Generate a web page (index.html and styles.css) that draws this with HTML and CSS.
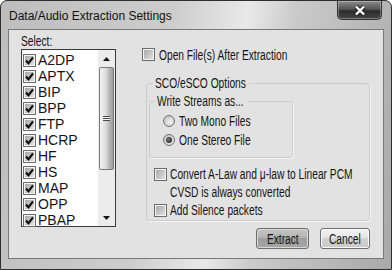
FILE: index.html
```html
<!DOCTYPE html>
<html lang="en">
<head>
  <meta charset="UTF-8">
  <title>Data/Audio Extraction Settings</title>
  <link rel="stylesheet" href="styles.css">
</head>
<body>
  <div class="window">
    <div class="titlebar">
      <span class="title">Data/Audio Extraction Settings</span>
      <span class="close">
        <svg width="16" height="11" viewBox="0 0 16 11">
          <path d="M4 1.5 L12 9.5 M12 1.5 L4 9.5" stroke="#1c1c1c" stroke-width="4.2" fill="none"/>
          <path d="M4 1.5 L12 9.5 M12 1.5 L4 9.5" stroke="#fff" stroke-width="2.4" fill="none"/>
        </svg>
      </span>
    </div>

    <div class="client">
      <div class="left">
        <div class="lbl"><span class="nar">Select:</span></div>
        <div class="listbox">
          <ul class="items">
            <li><span class="cb on"></span>A2DP</li>
            <li><span class="cb on"></span>APTX</li>
            <li><span class="cb on"></span>BIP</li>
            <li><span class="cb on"></span>BPP</li>
            <li><span class="cb on"></span>FTP</li>
            <li><span class="cb on"></span>HCRP</li>
            <li><span class="cb on"></span>HF</li>
            <li><span class="cb on"></span>HS</li>
            <li><span class="cb on"></span>MAP</li>
            <li><span class="cb on"></span>OPP</li>
            <li><span class="cb on"></span>PBAP</li>
          </ul>
          <div class="scrollbar">
            <div class="sb-btn">
              <svg width="7" height="4" viewBox="0 0 7 4"><polygon points="0,4 3.5,0 7,4" fill="#111"/></svg>
            </div>
            <div class="thumb"><span class="grip"></span></div>
            <div class="track"></div>
            <div class="sb-btn">
              <svg width="7" height="4" viewBox="0 0 7 4"><polygon points="0,0 7,0 3.5,4" fill="#111"/></svg>
            </div>
          </div>
        </div>
      </div>

      <div class="right">
        <div class="row"><span class="cb"></span><span class="nar">Open File(s) After Extraction</span></div>

        <fieldset class="grp">
          <legend class="lg-sco"><span class="nar">SCO/eSCO Options</span></legend>
          <fieldset class="grp inner">
            <legend class="lg-write"><span class="nar">Write Streams as...</span></legend>
            <div class="rrow first"><span class="radio"></span><span class="nar">Two Mono Files</span></div>
            <div class="rrow"><span class="radio sel"></span><span class="nar">One Stereo File</span></div>
          </fieldset>
          <div class="crow first"><span class="cb"></span><span class="nar">Convert A-Law and μ-law to Linear PCM</span></div>
          <div class="crow note"><span class="nar">CVSD is always converted</span></div>
          <div class="crow"><span class="cb"></span><span class="nar">Add Silence packets</span></div>
        </fieldset>

        <div class="buttons">
          <button class="btn default"><span class="nar">Extract</span></button>
          <button class="btn"><span class="nar">Cancel</span></button>
        </div>
      </div>
    </div>
  </div>
</body>
</html>
```

FILE: styles.css
```css
body {
  margin: 0;
  background: #fff;
}
.window {
  width: 392px;
  height: 270px;
  box-sizing: border-box;
  border: 1px solid #2e2e2e;
  border-radius: 7px 7px 0 0;
  background: linear-gradient(100deg, #bdbdbd 0%, #cdcdcd 40%, #e9e9e9 57%, #cacaca 68%, #a9a9a9 100%);
  display: flex;
  flex-direction: column;
  font-family: "Liberation Sans", sans-serif;
  font-size: 14px;
  color: #151515;
  overflow: hidden;
}
/* the dialog font is a tall condensed face */
.nar {
  display: inline-block;
  white-space: nowrap;
  transform: scaleX(0.73);
  transform-origin: 0 50%;
}
.titlebar {
  height: 28px;
  display: flex;
  justify-content: space-between;
  align-items: flex-start;
}
.title {
  font-size: 12px;
  line-height: 15px;
  margin: 8px 0 0 8px;
  color: #111;
}
.close {
  width: 45px;
  height: 19px;
  margin-right: 9px;
  box-sizing: border-box;
  border: 1px solid #333;
  border-top: none;
  border-radius: 0 0 5px 5px;
  background: linear-gradient(#8c8c8c, #555 45%, #2c2c2c 55%, #444);
  box-shadow: inset 0 0 0 1px rgba(255,255,255,.3);
  display: flex;
  align-items: center;
  justify-content: center;
}
.client {
  height: 230px;
  box-sizing: border-box;
  margin: 0 7px 10px;
  border: 1px solid #787878;
  background: #e2e2e2;
  display: flex;
}

/* left list */
.left {
  width: 95px;
  padding: 3px 0 0 12px;
}
.lbl {
  line-height: 16px;
}
.listbox {
  width: 95px;
  height: 178px;
  box-sizing: border-box;
  border: 1px solid #3a3a3a;
  background: #fff;
  display: flex;
}
.items {
  flex: 1;
  list-style: none;
  margin: 0;
  padding: 2px 0 0 1px;
}
.items li {
  height: 16px;
  display: flex;
  align-items: center;
  gap: 2px;
}
.scrollbar {
  width: 17px;
  display: flex;
  flex-direction: column;
  background: #ececec;
}
.sb-btn {
  height: 17px;
  display: flex;
  align-items: center;
  justify-content: center;
}
.thumb {
  height: 103px;
  box-sizing: border-box;
  margin: 0 1px;
  border: 1px solid #7a7a7a;
  border-radius: 2px;
  background: linear-gradient(90deg, #f4f4f4, #dcdcdc 45%, #b4b4b4 75%, #9c9c9c);
  display: flex;
  align-items: center;
  justify-content: center;
}
.grip {
  width: 7px;
  height: 5px;
  background: repeating-linear-gradient(#4a4a4a 0 1px, #f4f4f4 1px 2px);
}
.track {
  flex: 1;
}

/* checkboxes and radios */
.cb {
  width: 13px;
  height: 13px;
  flex: none;
  box-sizing: border-box;
  border: 1px solid #6c6c6c;
  background: linear-gradient(135deg, #a2a2a2, #e6e6e6);
  box-shadow: inset 0 0 0 1px #f4f4f4;
}
.cb.on {
  background:
    url("data:image/svg+xml,%3Csvg xmlns='http://www.w3.org/2000/svg' width='11' height='11'%3E%3Cpath d='M2 5.5 L4.5 8.3 L9 2.3' stroke='%23111' stroke-width='2.2' fill='none'/%3E%3C/svg%3E") center / 11px 11px no-repeat,
    linear-gradient(135deg, #a2a2a2, #e6e6e6);
}
.radio {
  width: 12px;
  height: 12px;
  flex: none;
  box-sizing: border-box;
  border: 1px solid #737373;
  border-radius: 50%;
  background: radial-gradient(circle at 60% 60%, #f2f2f2, #b8b8b8);
  display: flex;
  align-items: center;
  justify-content: center;
}
.radio.sel::after {
  content: "";
  width: 6px;
  height: 6px;
  border-radius: 50%;
  background: radial-gradient(circle at 40% 40%, #777, #111);
}

/* right options */
.right {
  width: 232px;
  margin-left: 26px;
  padding-top: 17px;
}
.row {
  height: 15px;
  display: flex;
  align-items: center;
  gap: 4px;
}
.grp {
  margin: 13px 0 0 4px;
  padding: 0 0 1px 2px;
  width: 224px;
  min-width: 0;
  box-sizing: border-box;
  border: 1px solid #cbcbcb;
  border-radius: 3px;
  box-shadow: 1px 1px 0 #f6f6f6;
}
.grp legend {
  box-sizing: border-box;
  padding: 0 2px;
  margin-left: 4px;
  line-height: 16px;
  white-space: nowrap;
}
.lg-sco {
  width: 96px;
}
.grp.inner {
  margin: 2px 0 0;
  padding: 0 0 8px 0;
  width: 144px;
}
.grp.inner legend {
  margin-left: 5px;
}
.lg-write {
  width: 92px;
}
.rrow {
  height: 19px;
  margin-left: 13px;
  display: flex;
  align-items: center;
  gap: 4px;
}
.rrow.first {
  margin-top: 2px;
}
.crow {
  height: 18px;
  margin-left: 5px;
  display: flex;
  align-items: center;
  gap: 3px;
}
.crow.first {
  margin-top: 7px;
}
.crow.note {
  padding-left: 16px;
}
.buttons {
  width: 224px;
  margin: 7px 0 0 4px;
  display: flex;
  justify-content: flex-end;
  gap: 11px;
}
.btn {
  width: 50px;
  height: 21px;
  padding: 0;
  border: 1px solid #6e6e6e;
  border-radius: 3px;
  font-family: inherit;
  font-size: 14px;
  color: #151515;
  background: linear-gradient(#f3f3f3, #e6e6e6 45%, #d2d2d2 50%, #c8c8c8);
  box-shadow: inset 0 0 0 1px #fafafa;
}
.btn .nar {
  transform-origin: 50% 50%;
}
.btn.default {
  width: 53px;
  background: linear-gradient(#c4c4c4, #b4b4b4 45%, #9e9e9e 50%, #a6a6a6);
  box-shadow: inset 0 0 0 1px #d8d8d8;
}
```
